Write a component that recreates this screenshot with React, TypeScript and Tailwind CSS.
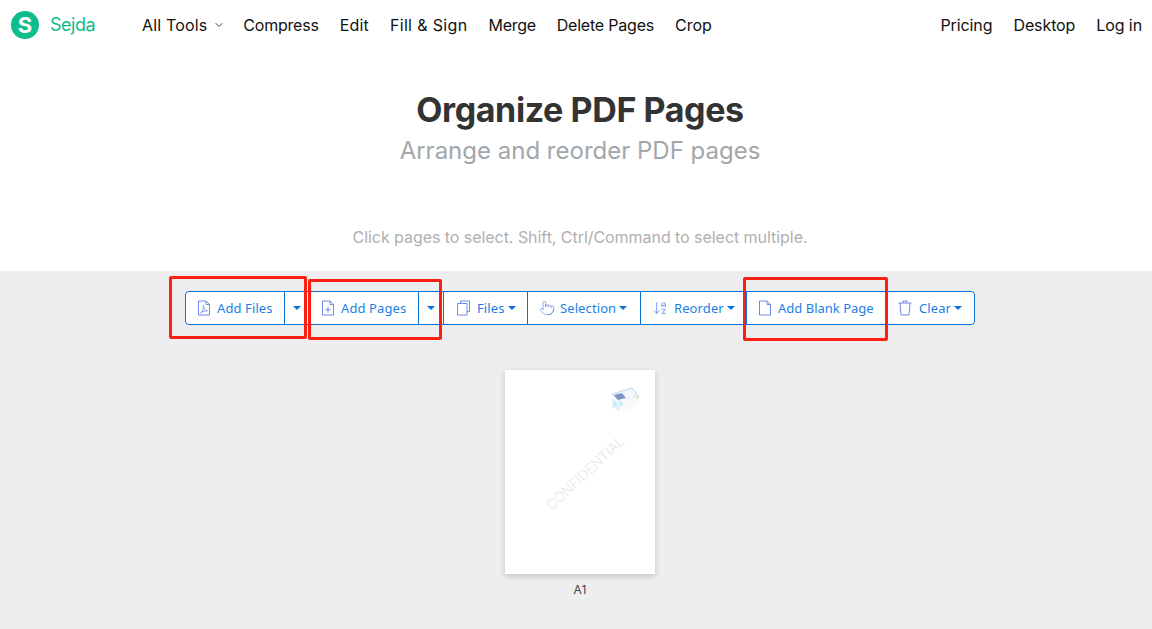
import React from "react";
import { ArrowDownAZ, Pointer, ChevronDown } from "lucide-react";

const Caret = ({ className = "" }: { className?: string }) => (
  <span className={`inline-block w-0 h-0 border-l-[4px] border-r-[4px] border-t-[4px] border-l-transparent border-r-transparent border-t-[#0b72d9] ${className}`} />
);

const ICON = "#6f8ae6";

const PdfIcon = () => (
  <svg width="14" height="16" viewBox="0 0 14 16" fill="none" stroke={ICON} strokeWidth="1">
    <path d="M1.5 1h7.5l3.5 3.5V15h-11z" />
    <path d="M9 1v3.5h3.5" />
    <path d="M3.5 13c2-1 3.3-4.5 3-7.5 0 3 1.5 4.5 4 5.500-2.500-.3-5 .2-7 2z" strokeWidth="0.8" />
  </svg>
);
const PlusFile = () => (
  <svg width="14" height="16" viewBox="0 0 14 16" fill="none" stroke={ICON} strokeWidth="1">
    <path d="M1.500 1h7.500l3.500 3.500V15h-11z" />
    <path d="M9 1v3.500h3.500" />
    <path d="M7 7v5.500M4.250 9.750h5.500" />
  </svg>
);
const BlankFile = () => (
  <svg width="14" height="16" viewBox="0 0 14 16" fill="none" stroke={ICON} strokeWidth="1">
    <path d="M1.500 1h7.500l3.500 3.500V15h-11z" />
    <path d="M9 1v3.500h3.500" />
  </svg>
);
const CopyIcon = () => (
  <svg width="15" height="16" viewBox="0 0 15 16" fill="none" stroke={ICON} strokeWidth="1">
    <path d="M4.500 3V1h9v10.500h-2.500" />
    <path d="M1.500 3.500h9.500v11.500H1.500z" />
  </svg>
);
const TrashIcon = () => (
  <svg width="14" height="16" viewBox="0 0 14 16" fill="none" stroke={ICON} strokeWidth="1">
    <path d="M.5 3h13" />
    <path d="M5 3V1h4v2" />
    <path d="M2 3l1 12h8l1-12" />
  </svg>
);

const Red = ({ className }: { className: string }) => (
  <div className={`absolute border-[3px] border-[#fb1f14] rounded-[2px] pointer-events-none ${className}`} />
);

const seg = "h-full flex items-center border-l border-[#0b72d9] text-[#1a7fe8] text-[13px] tracking-[0.1px]";

export default function App() {
  return (
    <div className="relative w-[1152px] h-[629px] overflow-hidden bg-white font-['Inter',sans-serif]">
      <header className="h-[49px] flex items-center pl-[11px] pr-[10px] text-[16px] text-[#111]">
        <div className="w-[28px] h-[28px] rounded-full bg-[#0fbd8c] flex items-center justify-center text-white text-[22px] font-bold leading-none">S</div>
        <span className="ml-[11px] text-[#0fbd8c] text-[18px] tracking-[-0.5px]">Sejda</span>
        <nav className="ml-[47px] flex items-center">
          <span className="tracking-[0.15px]">All Tools</span>
          <ChevronDown size={12} strokeWidth={1.75} className="ml-[6px] mr-[18px] text-[#222]" />
          <span className="tracking-[-0.2px]">Compress</span>
          <span className="ml-[21px] tracking-[0.15px]">Edit</span>
          <span className="ml-[21px] tracking-[0.35px]">Fill &amp; Sign</span>
          <span className="ml-[21px] tracking-[-0.3px]">Merge</span>
          <span className="ml-[21px] tracking-[-0.2px]">Delete Pages</span>
          <span className="ml-[21px]">Crop</span>
        </nav>
        <nav className="ml-auto flex items-center gap-[21px]">
          <span className="tracking-[-0.1px]">Pricing</span>
          <span className="tracking-[-0.1px]">Desktop</span>
          <span className="tracking-[-0.1px]">Log in</span>
        </nav>
      </header>
      <section className="h-[222px] pl-[8px] flex flex-col items-center">
        <h1 className="mt-[40px] text-[34px] leading-[42px] font-bold text-[#333] tracking-[-0.4px]">Organize PDF Pages</h1>
        <p className="mt-[5px] text-[24px] leading-[30px] text-[#a2a7ab]">Arrange and reorder PDF pages</p>
        <p className="mt-[60px] text-[16px] leading-[22px] tracking-[-0.05px] text-[#b0b0b0]">Click pages to select. Shift, Ctrl/Command to select multiple.</p>
      </section>
      <main className="h-[358px] pl-[8px] bg-[#eeeeee] flex flex-col items-center pt-[20px]">
        <div className="w-[790px] h-[34px] flex bg-white border border-[#0b72d9] rounded-[4px] font-['Noto_Sans',sans-serif]">
          <div className="w-[98px] flex items-center gap-[6px] pl-[11px] text-[#1a7fe8] text-[13px] tracking-[0.1px]"><PdfIcon /><span className="relative top-[1px]">Add Files</span></div>
          <div className={`${seg} w-[24px] justify-center`}><Caret /></div>
          <div className={`${seg} w-[110px] gap-[6px] pl-[12px]`}><PlusFile /><span className="relative top-[1px]">Add Pages</span></div>
          <div className={`${seg} w-[25px] justify-center`}><Caret /></div>
          <div className={`${seg} w-[84px] gap-[6px] pl-[12px]`}><CopyIcon /><span className="relative top-[1px]">Files</span><Caret className="-ml-[3px]" /></div>
          <div className={`${seg} w-[113px] gap-[5px] pl-[11px]`}><Pointer size={16} strokeWidth={1.1} color={ICON} /><span className="relative top-[1px]">Selection</span><Caret className="-ml-[2px]" /></div>
          <div className={`${seg} w-[106px] gap-[6px] pl-[11px]`}><ArrowDownAZ size={16} strokeWidth={1.3} color={ICON} /><span className="relative top-[1px]">Reorder</span><Caret className="-ml-[3px]" /></div>
          <div className={`${seg} w-[140px] gap-[6px] pl-[11px]`}><BlankFile /><span className="relative top-[1px] tracking-[0px]">Add Blank Page</span></div>
          <div className="flex-1 flex items-center gap-[7px] pl-[12px] text-[#1a7fe8] text-[13px] tracking-[0.1px]"><TrashIcon /><span className="relative top-[1px]">Clear</span><Caret className="-ml-[4px]" /></div>
        </div>
        <div className="mt-[45px] w-[150px] h-[204px] bg-white shadow-[0_2px_6px_rgba(0,0,0,0.2)] relative overflow-hidden">
          <span className="absolute left-[30px] top-[94px] text-[#dedede] text-[14px] leading-[18px] font-extralight -rotate-[43deg] whitespace-nowrap tracking-[-0.1px]">CONFIDENTIAL</span>
          <svg className="absolute left-[105px] top-[16px]" width="30" height="28" viewBox="0 0 30 28">
            <path d="M2 8 22 2l7 9-17 7z" fill="#f0f6fc" stroke="#bcd4f2" />
            <path d="M4 9l8-2 4 5-8 2z" fill="#7f96c3" />
            <path d="M2 12l8 5v9l-8-5z" fill="#def4fc" />
            <path d="M10 17l17-6v8l-16 7z" fill="#f7f9fb" />
            <path d="M4 15l2 1v4l-2-1zM10 17l3-1v3l-3 1z" fill="#c2e6f8" />
            <path d="M24 10l4 3" stroke="#f5dca0" />
          </svg>
        </div>
        <div className="mt-[8px] text-[12px] leading-[16px] text-[#444]">A1</div>
      </main>
      <Red className="left-[169px] top-[276px] w-[138px] h-[63px]" />
      <Red className="left-[308px] top-[279px] w-[134px] h-[61px]" />
      <Red className="left-[743px] top-[277px] w-[145px] h-[64px]" />
    </div>
  );
}
